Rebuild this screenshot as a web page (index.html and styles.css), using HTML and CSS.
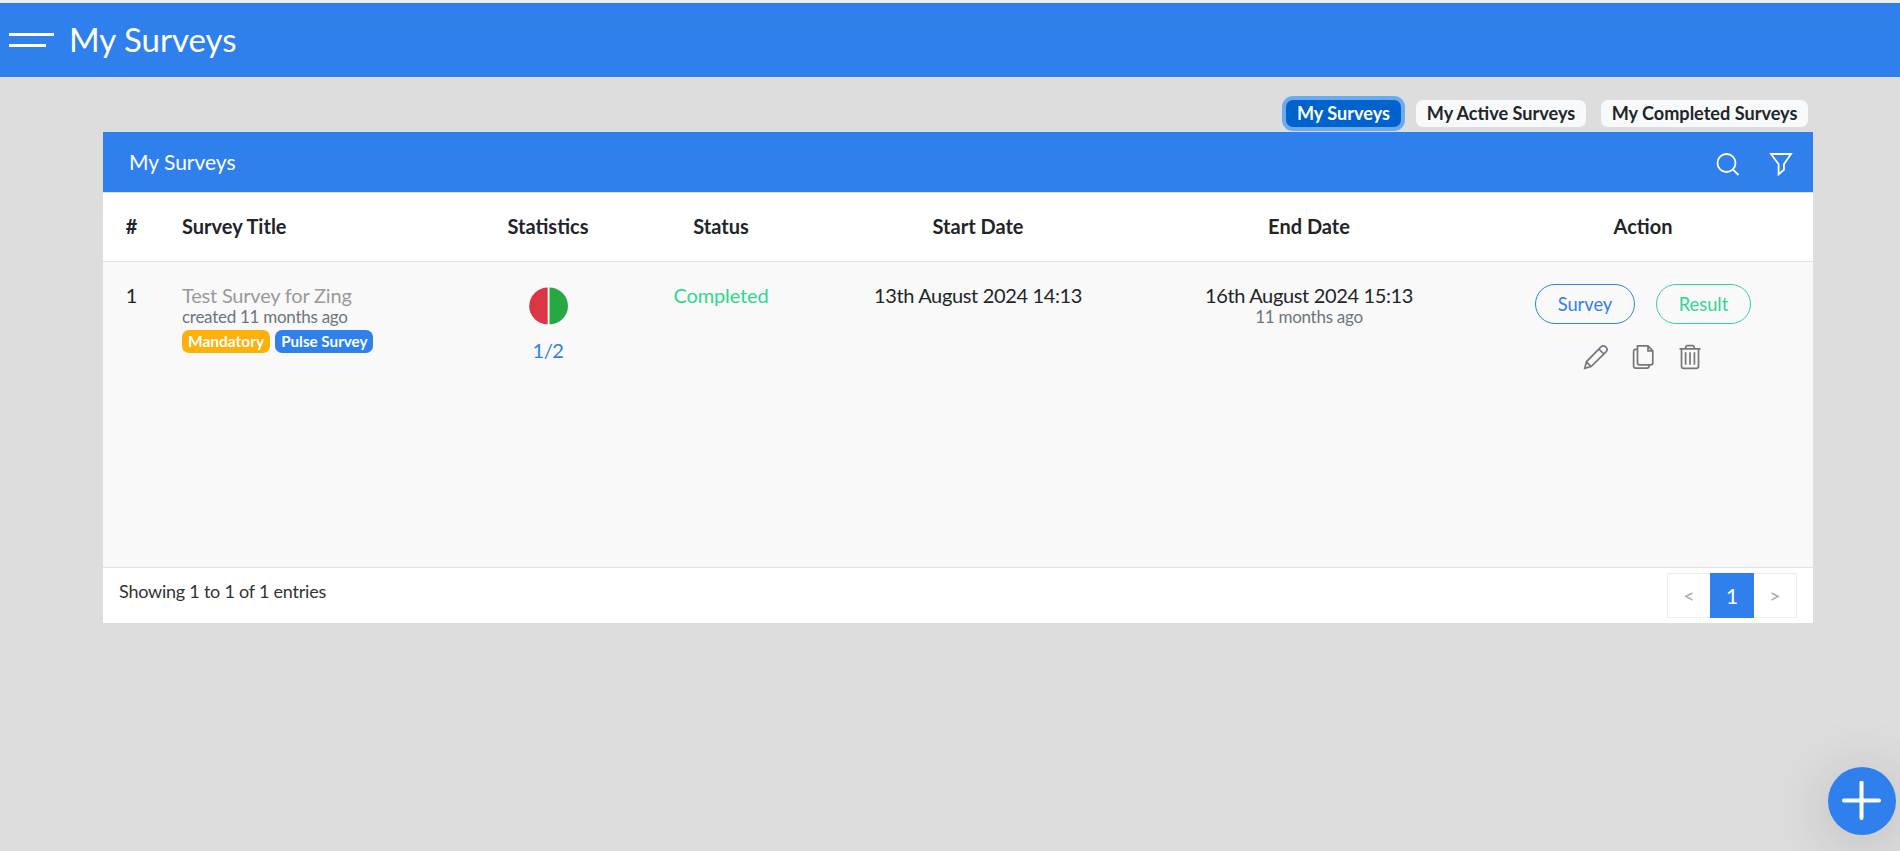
FILE: index.html
```html
<!DOCTYPE html>
<html lang="en">
<head>
<meta charset="utf-8">
<title>My Surveys</title>
<link rel="stylesheet" href="styles.css">
</head>
<body>
<header class="topbar">
  <button class="menu" aria-label="Menu"><span class="bar"></span><span class="bar short"></span></button>
  <h1 class="page-title">My Surveys</h1>
</header>
<main class="content">
  <nav class="tabs">
    <a class="tab active">My Surveys</a>
    <a class="tab">My Active Surveys</a>
    <a class="tab last">My Completed Surveys</a>
  </nav>
  <section class="card">
    <div class="card-head">
      <h2 class="card-title">My Surveys</h2>
      <div class="tools">
        <svg width="24" height="24" viewBox="0 0 24 24"><circle cx="10.5" cy="11" r="9"/><path d="M17 17.6 22.5 23"/></svg>
        <svg width="24" height="24" viewBox="0 0 24 24"><path d="M2 2H22L14.9 12.2V17.8L9.6 22.3V12.2Z"/></svg>
      </div>
    </div>
    <div class="row head">
      <div>#</div><div class="left">Survey Title</div><div>Statistics</div><div>Status</div><div>Start Date</div><div>End Date</div><div>Action</div>
    </div>
    <div class="row body">
      <div>1</div>
      <div class="left">
        <div class="name">Test Survey for Zing</div>
        <div class="note">created 11 months ago</div>
        <div class="badges"><span class="badge amber">Mandatory</span><span class="badge blue">Pulse Survey</span></div>
      </div>
      <div class="stats">
        <svg class="pie" width="40" height="40" viewBox="0 0 40 40"><circle cx="20.5" cy="20" r="19" fill="#fff"/><path d="M19.7 1.5A18.5 18.5 0 0 0 19.7 38.5Z" fill="#dc3545"/><path d="M21.5 1.5A18.5 18.5 0 0 1 21.5 38.5Z" fill="#28a745"/></svg>
        <span class="ratio">1/2</span>
      </div>
      <div class="done">Completed</div>
      <div class="date">13th August 2024 14:13</div>
      <div><div class="date">16th August 2024 15:13</div><div class="note">11 months ago</div></div>
      <div class="actions">
        <div class="pills"><a class="pill survey">Survey</a><a class="pill result">Result</a></div>
        <div class="icons">
          <svg width="26" height="26" viewBox="0 0 26 26"><path d="M1.8 24.3 3.4 17.8 18.2 2.7Q20.4.8 22.9 3Q25.2 5.4 23.2 7.7L8.2 22.6ZM3.4 17.8 8.2 22.6M15.9 5.1 20.9 10"/></svg>
          <svg width="26" height="26" viewBox="0 0 26 26"><path d="M7.5 1.8H18L22.8 6.8V18.8Q22.8 20.8 20.8 20.8H9.5Q7.5 20.8 7.5 18.8ZM18 1.8V6.8H22.8M7.5 5.4H5.8Q3.6 5.4 3.6 7.6V22Q3.6 24.2 5.8 24.2H17Q19.3 24.2 19.3 21"/></svg>
          <svg width="26" height="26" viewBox="0 0 26 26"><path d="M2.5 4.8H23.5M8.5 4.8 9 2.5Q9.2 1.6 10.2 1.6H15.8Q16.8 1.6 17 2.5L17.5 4.8M4.5 4.8V22.2Q4.5 24.4 6.7 24.4H19.3Q21.5 24.4 21.5 22.2V4.8M8.6 8.3V20.7M13 8.3V20.7M17.4 8.3V20.7"/></svg>
        </div>
      </div>
    </div>
    <footer class="card-foot">
      <span class="summary">Showing 1 to 1 of 1 entries</span>
      <div class="pager"><a class="page">&lt;</a><a class="page current">1</a><a class="page">&gt;</a></div>
    </footer>
  </section>
</main>
<button class="add" aria-label="Add survey"><svg width="40" height="40" viewBox="0 0 40 40"><path d="M19.5 1.5V37M2 19.5H37"/></svg></button>
</body>
</html>
```
FILE: styles.css
```css
* { box-sizing: border-box; }
body {
  margin: 0;
  height: 851px;
  overflow: hidden;
  background: #ddd;
  color: #212529;
  font: 20px/24px Lato, sans-serif;
}
button { border: 0; padding: 0; background: none; }
h1, h2 { margin: 0; font-weight: 400; }
svg { display: block; fill: none; stroke: none; }
.topbar {
  display: flex;
  align-items: center;
  height: 77px;
  padding-left: 9px;
  border-top: 3px solid #eeeef4;
  background: #2f80ed;
  color: #fff;
}
.menu { display: flex; flex-direction: column; gap: 8px; width: 45px; padding-bottom: 1px; }
.bar { height: 3px; background: #fff; }
.short { width: 37px; }
.page-title { margin-left: 15px; padding-bottom: 3px; font-size: 33px; line-height: 40px; }
.content { width: 1710px; margin-left: 103px; }
.tabs { display: flex; justify-content: flex-end; gap: 15px; padding: 23px 5px 5px 0; }
.tab {
  width: 170px;
  height: 27px;
  border-radius: 7px;
  background: #f8f9fa;
  font-size: 18.1px;
  line-height: 26px;
  font-weight: 700;
  text-align: center;
}
.tab.active { width: 115px; background: #0062cc; color: #fff; box-shadow: 0 0 0 4px #6caaee; }
.tab.last { width: 207px; }
.card { background: #fff; }
.card-head {
  display: flex;
  align-items: center;
  justify-content: space-between;
  height: 60px;
  padding: 0 20px 0 26px;
  background: #2f80ed;
  color: #fff;
}
.card-title { font-size: 21px; line-height: 24px; padding-bottom: 1px; }
.tools { display: flex; gap: 29px; padding-top: 4px; }
.tools svg { stroke: #fff; stroke-width: 1.8; }
.row {
  display: grid;
  grid-template-columns: 57px 305px 166px 180px 334px 328px 340px;
  text-align: center;
}
.row > .left { padding-left: 22px; text-align: left; }
.head {
  height: 70px;
  padding-top: 21px;
  border-top: 1px solid #dee2e6;
  border-bottom: 1px solid #dee2e6;
  font-weight: 700;
}
.body { height: 305px; padding-top: 21px; background: #f9f9f9; }
.name { color: #999; letter-spacing: -.2px; }
.date { letter-spacing: -.35px; }
.note { font-size: 17px; line-height: 18px; letter-spacing: -.27px; padding-top: 1px; color: #6c757d; }
.badges { display: flex; gap: 5px; margin-top: 4px; }
.badge {
  height: 23px;
  padding: 0 6px;
  border-radius: 7px;
  color: #fff;
  font-size: 15.2px;
  line-height: 23px;
  font-weight: 700;
}
.amber { background: #ffb00a; font-size: 15.5px; }
.blue { background: #2f80ed; }
.stats { display: flex; flex-direction: column; align-items: center; gap: 12px; padding-top: 3px; }
.ratio { color: #2f80ed; letter-spacing: -.4px; }
.done { color: #2dd790; letter-spacing: -.15px; }
.actions { padding-top: 1px; }
.pills { display: flex; justify-content: center; gap: 21px; }
.pill {
  width: 100px;
  height: 40px;
  border: 1px solid;
  border-radius: 20px;
  font-size: 18.3px;
  line-height: 38px;
}
.survey { color: #2f80ed; }
.result { width: 95px; color: #2dd790; }
.icons { display: flex; justify-content: center; gap: 21px; margin-top: 20px; }
.icons svg { stroke: #777; stroke-width: 1.7; }
.card-foot {
  display: flex;
  justify-content: space-between;
  height: 56px;
  padding: 5px 16px 0;
  border-top: 1px solid #dee2e6;
}
.summary { color: #333; font-size: 18px; line-height: 36px; letter-spacing: -.23px; }
.pager { display: flex; }
.page {
  width: 43px;
  height: 45px;
  border: 1px solid #eee;
  color: #aaa;
  font-size: 19.5px;
  line-height: 44px;
  text-align: center;
}
.page:first-child { border-right: 0; }
.page:last-child { border-left: 0; }
.current { width: 44px; border: 0; background: #2f80ed; color: #fff; font-size: 21px; line-height: 45px; }
.add {
  position: fixed;
  right: 4px;
  bottom: 16px;
  display: grid;
  place-items: center;
  width: 68px;
  height: 68px;
  border-radius: 50%;
  background: #2f80ed;
  box-shadow: 0 8px 64px rgba(0, 0, 0, .18);
}
.add svg { stroke: #fff; stroke-width: 4; stroke-linecap: round; }
```
